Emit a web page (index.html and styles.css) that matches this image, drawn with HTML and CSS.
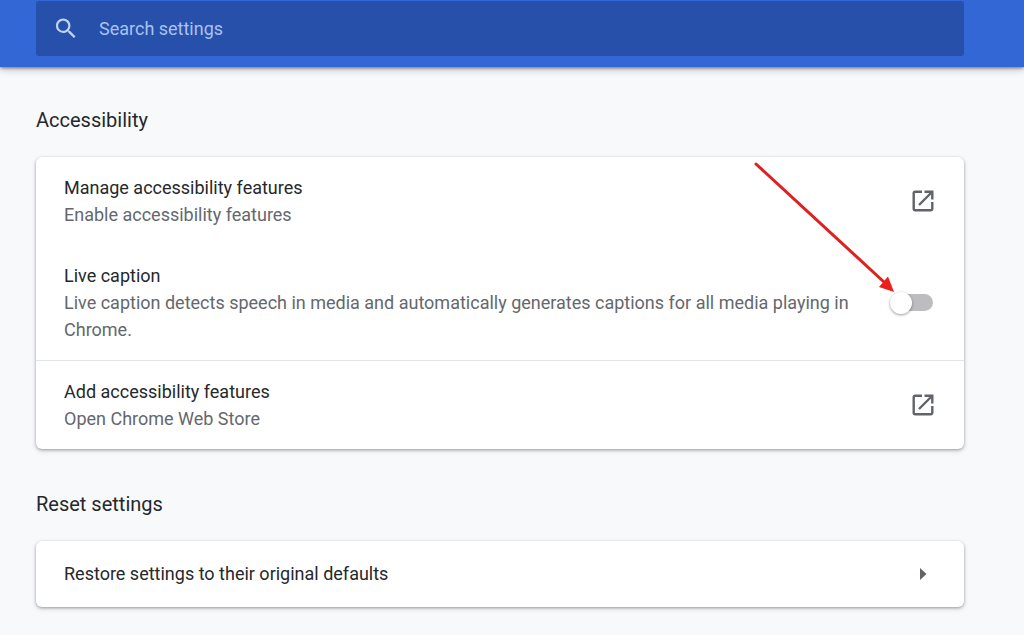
FILE: index.html
```html
<!DOCTYPE html>
<html lang="en">
<head>
<meta charset="utf-8">
<meta name="viewport" content="width=device-width, initial-scale=1">
<title>Settings</title>
<link rel="stylesheet" href="styles.css">
</head>
<body>
<header class="toolbar">
  <label class="search">
    <svg class="search-icon" viewBox="0 0 24 24" aria-hidden="true"><path d="M15.5 14h-.79l-.28-.27A6.471 6.471 0 0 0 16 9.500 6.500 6.500 0 1 0 9.500 16c1.610 0 3.090-.59 4.230-1.570l.27.28v.79l5 4.990L20.490 19l-4.990-5zm-6 0C7.010 14 5 11.990 5 9.500S7.010 5 9.500 5 14 7.010 14 9.500 11.990 14 9.500 14z"/></svg>
    <input class="search-input" type="search" placeholder="Search settings" aria-label="Search settings">
  </label>
</header>
<main class="content">
  <section class="section">
    <h2 class="section-title">Accessibility</h2>
    <div class="card">
      <div class="row">
        <div class="row-text">
          <div class="label" id="manage">Manage accessibility features</div>
          <div class="sublabel">Enable accessibility features</div>
        </div>
        <button class="icon-button" type="button" aria-labelledby="manage">
          <svg class="launch-icon" viewBox="0 0 22 22" aria-hidden="true"><path class="stroke" d="M10 1.700H3.200A1.500 1.500 0 0 0 1.700 3.200v15.600A1.500 1.500 0 0 0 3.200 20.300h15.600a1.500 1.500 0 0 0 1.500-1.500V12M7 15 19 3"/><path d="M12.500.5h9V9.500h-2.400V2.900h-6.600z"/></svg>
        </button>
      </div>
      <div class="row">
        <label class="row-text" for="live-caption">
          <span class="label">Live caption</span>
          <span class="sublabel">Live caption detects speech in media and automatically generates captions for all media playing in Chrome.</span>
        </label>
        <div class="toggle-wrap">
          <input class="toggle" type="checkbox" role="switch" id="live-caption">
          <svg class="pointer" viewBox="0 0 142 132" aria-hidden="true"><path class="pointer-line" d="M3 3 131 121"/><path d="M141 131 135 115.500 126 126z"/></svg>
        </div>
      </div>
      <div class="row divided">
        <div class="row-text">
          <div class="label" id="add">Add accessibility features</div>
          <div class="sublabel">Open Chrome Web Store</div>
        </div>
        <button class="icon-button" type="button" aria-labelledby="add">
          <svg class="launch-icon" viewBox="0 0 22 22" aria-hidden="true"><path class="stroke" d="M10 1.700H3.200A1.500 1.500 0 0 0 1.700 3.200v15.600A1.500 1.500 0 0 0 3.200 20.300h15.600a1.500 1.500 0 0 0 1.500-1.500V12M7 15 19 3"/><path d="M12.500.5h9V9.500h-2.400V2.900h-6.600z"/></svg>
        </button>
      </div>
    </div>
  </section>
  <section class="section">
    <h2 class="section-title">Reset settings</h2>
    <div class="card">
      <div class="row single">
        <div class="row-text label" id="restore">Restore settings to their original defaults</div>
        <button class="icon-button" type="button" aria-labelledby="restore">
          <svg class="launch-icon" viewBox="0 0 22 22" aria-hidden="true"><path d="M8 5 14.500 11 8 17z"/></svg>
        </button>
      </div>
    </div>
  </section>
</main>
</body>
</html>
```
FILE: styles.css
```css
* {
  box-sizing: border-box;
}

body {
  margin: 0;
  background: #f8f9fb;
  color: #25282c;
  font-family: Roboto, "Liberation Sans", sans-serif;
  font-size: 18px;
  line-height: 27px;
}

.toolbar {
  padding: 1px 60px 11px 36px;
  background: #3367d6;
  box-shadow: 0 1px 3px rgba(0, 0, 0, .45), 0 3px 8px rgba(0, 0, 0, .2);
}

.search {
  display: flex;
  align-items: center;
  gap: 19px;
  padding: 14px 16px;
  border-radius: 3px;
  background: #2650a9;
}

.search-icon {
  flex: none;
  width: 28px;
  height: 27px;
  fill: #c0d3f8;
}

.search-input {
  flex: 1;
  min-width: 0;
  height: 27px;
  padding: 0;
  border: 0;
  outline: 0;
  background: none;
  color: #fff;
  font: inherit;
}

.search-input::placeholder {
  color: #a9c2f2;
  opacity: 1;
}

.content {
  padding: 37px 60px 28px 36px;
}

.section + .section {
  margin-top: 39px;
}

.section-title {
  margin: 0 0 21px;
  font-size: 20px;
  line-height: 32px;
  font-weight: 400;
}

.card {
  border-radius: 6px;
  background: #fff;
  box-shadow: 0 1px 3px rgba(60, 64, 67, .4), 0 2px 5px rgba(60, 64, 67, .16);
}

.row {
  display: flex;
  align-items: center;
  padding: 17px 28px;
}

.divided {
  border-top: 1px solid #e4e5e7;
}

.single {
  padding: 19px 28px 20px;
}

.row-text {
  flex: 1;
  margin-right: 32px;
}

.label,
.sublabel {
  display: block;
}

.sublabel {
  color: #64686d;
}

.icon-button {
  display: flex;
  padding: 2px;
  border: 0;
  background: none;
}

.launch-icon {
  width: 22px;
  height: 22px;
  fill: #606468;
}

.stroke {
  fill: none;
  stroke: #606468;
  stroke-width: 2.4;
}

.toggle-wrap {
  position: relative;
  display: flex;
  margin-right: 3px;
}

.toggle {
  appearance: none;
  display: flex;
  align-items: center;
  width: 43px;
  height: 22px;
  margin: 0;
}

.toggle::before {
  content: "";
  width: 22px;
  height: 22px;
  border-radius: 50%;
  background: #fff;
  box-shadow: 0 1px 3px rgba(0, 0, 0, .4);
  z-index: 1;
}

.toggle::after {
  content: "";
  width: 34px;
  height: 17px;
  margin-left: -13px;
  border-radius: 9px;
  background: #bdbdbf;
}

.toggle:checked {
  flex-direction: row-reverse;
}

.pointer {
  position: absolute;
  right: 38px;
  bottom: 21px;
  width: 142px;
  height: 132px;
  fill: #f01d1d;
  pointer-events: none;
}

.pointer-line {
  fill: none;
  stroke: #e02020;
  stroke-width: 3;
  stroke-linecap: round;
}
```
